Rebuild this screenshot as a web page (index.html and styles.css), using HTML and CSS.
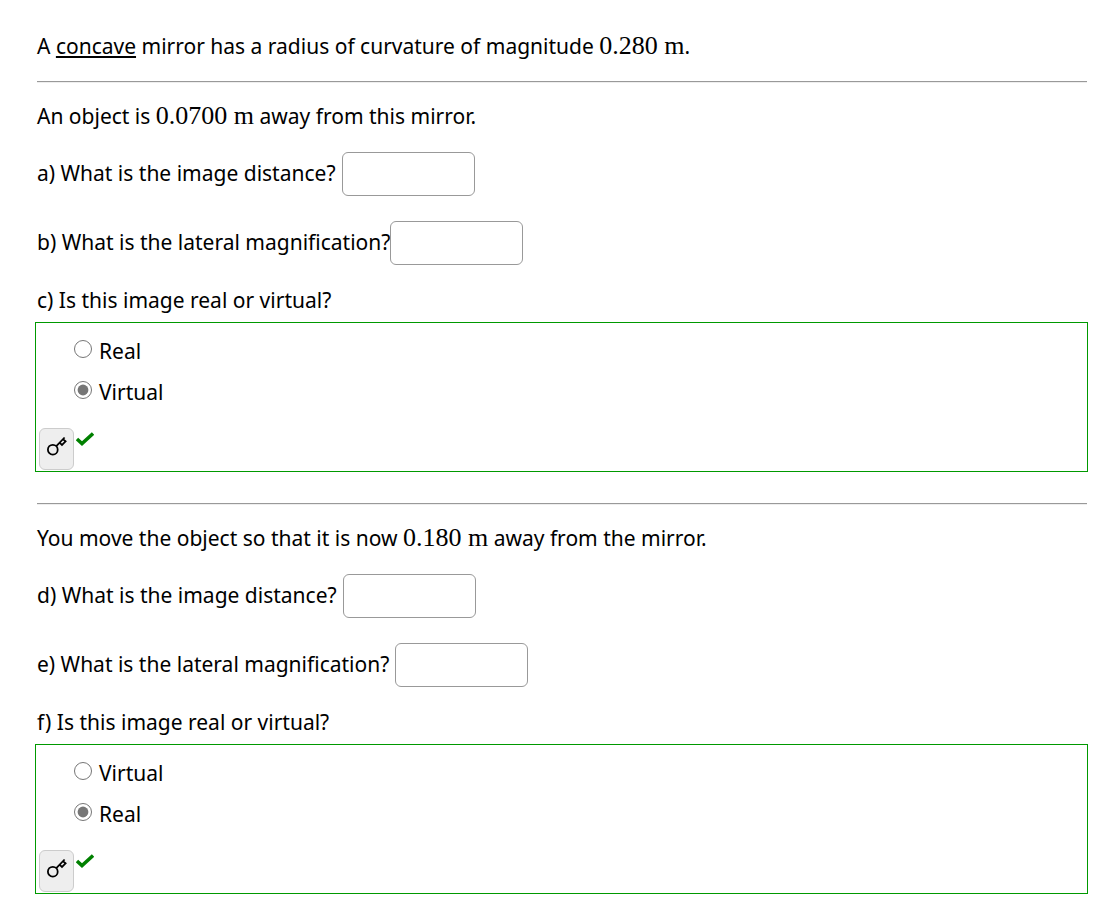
FILE: index.html
```html
<!DOCTYPE html>
<html lang="en">
<head>
<meta charset="utf-8">
<meta name="viewport" content="width=device-width, initial-scale=1">
<title>Concave mirror</title>
<link rel="stylesheet" href="styles.css">
</head>
<body>
<main class="question">
  <p class="text">A <u>concave</u> mirror has a radius of curvature of magnitude <span class="math">0.280 m</span>.</p>
  <hr class="rule">
  <section class="part">
    <p class="text">An object is <span class="math">0.0700 m</span> away from this mirror.</p>
    <div class="row"><label for="a">a) What is the image distance?</label><input class="answer" id="a" type="text"></div>
    <div class="row row-tight"><label for="b">b) What is the lateral magnification?</label><input class="answer" id="b" type="text"></div>
    <p class="text" id="c">c) Is this image real or virtual?</p>
    <div class="choices" role="radiogroup" aria-labelledby="c">
      <label class="choice"><input type="radio" name="c">Real</label>
      <label class="choice"><input type="radio" name="c" checked>Virtual</label>
      <div class="result">
        <button class="key" type="button" aria-label="Show answer"><svg width="20" height="20" viewBox="0 0 20 20" fill="none" stroke="#000" stroke-width="1.8"><circle cx="5.8" cy="13.7" r="4.9"/><path d="M9.3 10.2 17.6 1.5M12.8 6.8 15 9 18.6 5.4 16 3.2"/></svg></button>
        <svg class="check" width="18" height="14" viewBox="0 0 18 14" fill="none" stroke="#008000" stroke-width="3.4"><path d="M1 7 6 11.6 17 1.5"/></svg>
      </div>
    </div>
  </section>
  <hr class="rule">
  <section class="part">
    <p class="text">You move the object so that it is now <span class="math">0.180 m</span> away from the mirror.</p>
    <div class="row"><label for="d">d) What is the image distance?</label><input class="answer" id="d" type="text"></div>
    <div class="row"><label for="e">e) What is the lateral magnification?</label><input class="answer" id="e" type="text"></div>
    <p class="text" id="f">f) Is this image real or virtual?</p>
    <div class="choices" role="radiogroup" aria-labelledby="f">
      <label class="choice"><input type="radio" name="f">Virtual</label>
      <label class="choice"><input type="radio" name="f" checked>Real</label>
      <div class="result">
        <button class="key" type="button" aria-label="Show answer"><svg width="20" height="20" viewBox="0 0 20 20" fill="none" stroke="#000" stroke-width="1.8"><circle cx="5.8" cy="13.7" r="4.9"/><path d="M9.3 10.2 17.6 1.5M12.8 6.8 15 9 18.6 5.4 16 3.2"/></svg></button>
        <svg class="check" width="18" height="14" viewBox="0 0 18 14" fill="none" stroke="#008000" stroke-width="3.4"><path d="M1 7 6 11.6 17 1.5"/></svg>
      </div>
    </div>
  </section>
</main>
</body>
</html>
```
FILE: styles.css
```css
* { box-sizing: border-box; }
body {
  margin: 0;
  background: #fff;
  color: #000;
  font: 21px/32px "Trebuchet MS", "Noto Sans", sans-serif;
}
.question { padding: 30px 15px 22px 37px; }
.text { margin: 0; }
.text u { text-decoration-thickness: 2px; text-underline-offset: 2px; }
.math { font-family: "Liberation Serif", serif; font-size: 26px; line-height: 24px; }
.rule { margin: 19px 0 17px; border: 0; border-top: 1px solid #999; border-bottom: 1px solid #eee; }
.row { display: flex; align-items: center; gap: 6px; margin: 20px 0 25px; }
.row label { padding-bottom: 3px; }
.row + .row { margin-bottom: 19px; }
.row-tight { gap: 0; }
.answer {
  width: 133px;
  height: 44px;
  padding: 4px 8px;
  border: 1px solid #999;
  border-radius: 6px;
  background: #fff;
  font: inherit;
}
.choices {
  margin: 6px -1px 31px -2px;
  padding: 7px 3px 1px;
  border: 1px solid #090;
}
.choice { display: flex; align-items: center; gap: 7px; height: 41px; padding-left: 35px; }
.choice input { width: 18px; height: 18px; margin: 0 0 4px; accent-color: #767676; filter: grayscale(1); }
.result { display: flex; align-items: flex-start; gap: 2px; margin-top: 16px; }
.key {
  display: flex;
  align-items: center;
  justify-content: center;
  width: 35px;
  height: 42px;
  padding: 0 0 6px;
  border: 1px solid #ccc;
  border-radius: 6px;
  background: #eee;
}
.check { margin-top: 4px; }
```
